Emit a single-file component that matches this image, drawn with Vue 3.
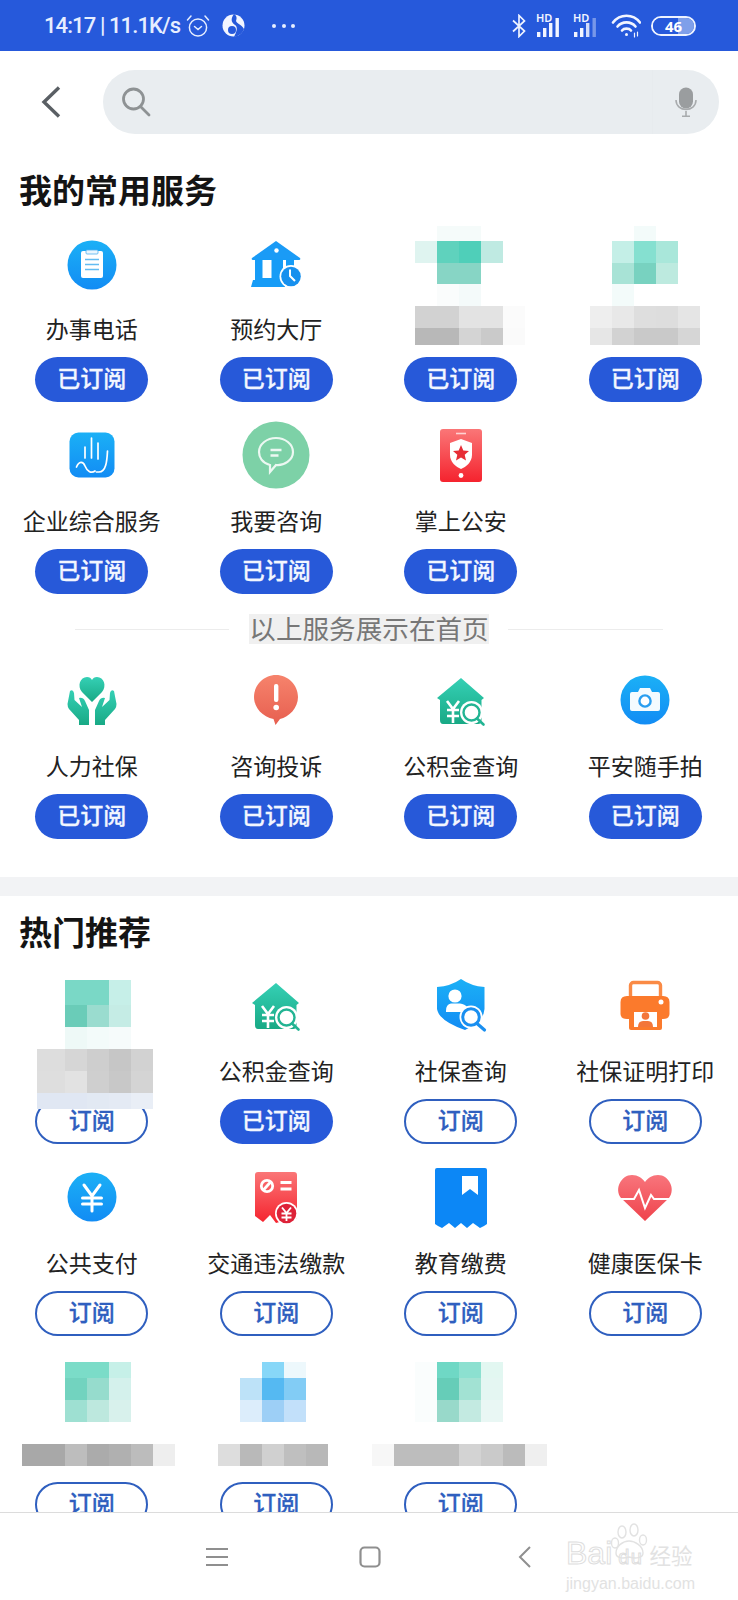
<script setup>
const mk = (name, icon, on = true, mosaic = null) => ({ name, icon, on, mosaic })
const _ = ''
const mosaicA = { left: 46.5, top: 2, cols: [21.5, 22, 22, 22, 22], rows: [15, 22, 21, 22, 22, 17], cells: [
  _, '#f5fbfa', '#f5fbfa', _, _,
  '#dff4f0', '#5fd2bd', '#4fcfb9', '#bfeae2', _,
  _, '#87d5c5', '#87d5c5', _, _,
  _, '#fafcfc', '#f4fafa', _, _,
  '#d2d2d2', '#d2d2d2', '#e3e3e3', '#e3e3e3', '#fbfbfb',
  '#b8b8b8', '#b8b8b8', '#d4d4d4', '#cacaca', '#fafafa'
] }
const mosaicB = { left: 37, top: 2, cols: [22, 21.5, 22, 22, 22], rows: [15, 22, 21, 22, 22, 17], cells: [
  _, _, '#f3fbfa', _, _,
  _, '#c4efe7', '#85e0d0', '#a9e7da', _,
  _, '#a8e3d6', '#78d2c0', '#bdeadf', _,
  _, '#f3fbfa', _, _, _,
  '#eeeeee', '#e8e8e8', '#dedede', '#dddddd', '#e5e5e5',
  '#e6e6e6', '#d2d2d2', '#c9c9c9', '#c9c9c9', '#d6d6d6'
] }
const mosaicC = { left: 37, top: 14, cols: [28, 22, 22, 22, 22], rows: [25, 22, 22, 22, 22, 16], cells: [
  _, '#7ad8c6', '#7ad8c6', '#c6efe8', _,
  _, '#6accb8', '#9adccf', '#c5ece5', _,
  _, '#eef9f7', '#f3fbfa', '#f6fbfb', _,
  '#dddddd', '#d6d6d6', '#cecece', '#c6c6c6', '#d2d2d2',
  '#dedede', '#e2e2e2', '#cfcfcf', '#c8c8c8', '#d4d4d4',
  '#e0e7f3', '#e0e7f3', '#e2e9f3', '#e4eaf4', '#e9eef6'
] }
const mosaicD = { left: 22, top: 13, cols: [22, 21, 22, 22, 22, 22, 22], rows: [16, 22, 22, 22, 22], cells: [
  _, _, '#7bdcc8', '#7bdcc8', '#c6f0e8', _, _,
  _, _, '#72d3bf', '#96dccd', '#d4f1ec', _, _,
  _, _, '#9ee0d2', '#bde8de', '#d8f1ec', _, _,
  _, _, _, _, _, _, _,
  '#a8a8a8', '#a8a8a8', '#bdbdbd', '#ababab', '#b0b0b0', '#bcbcbc', '#eeeeee'
] }
const mosaicE = { left: 33.5, top: 13, cols: [22.5, 21.5, 22, 22, 22], rows: [16, 22, 22, 22, 22], cells: [
  _, _, '#87d7f8', '#edf8fc', _,
  _, '#bde2f8', '#55b9f2', '#82ccf5', _,
  _, '#dcedfb', '#9dcff6', '#c2e0fa', _,
  _, _, _, _, _,
  '#dddddd', '#b9b9b9', '#d0d0d0', '#bfbfbf', '#b8b8b8'
] }
const mosaicF = { left: 3, top: 13, cols: [22, 21.5, 21.5, 22, 22, 22, 22, 22], rows: [16, 22, 22, 22, 22], cells: [
  _, _, '#fafdfd', '#6fd8c5', '#8ce0d0', '#e2f7f1', _, _,
  _, _, '#fafdfd', '#66cdb8', '#a2e2d3', '#e4f6f2', _, _,
  _, _, '#fafdfd', '#98d9ca', '#c3eae1', '#e9f7f4', _, _,
  _, _, _, _, _, _, _, _,
  '#f7f7f7', '#bdbdbd', '#bdbdbd', '#bdbdbd', '#d3d3d3', '#cacaca', '#bbbbbb', '#efefef'
] }

const common = [
  mk('办事电话', 'clip'), mk('预约大厅', 'bank'), mk('', '', true, mosaicA), mk('', '', true, mosaicB),
  mk('企业综合服务', 'hand'), mk('我要咨询', 'chat'), mk('掌上公安', 'phone')
]
const common2 = [
  mk('人力社保', 'care'), mk('咨询投诉', 'alert'), mk('公积金查询', 'house'), mk('平安随手拍', 'camera')
]
const hot = [
  mk('', '', false, mosaicC), mk('公积金查询', 'house'), mk('社保查询', 'shield', false), mk('社保证明打印', 'printer', false),
  mk('公共支付', 'yen', false), mk('交通违法缴款', 'receipt', false), mk('教育缴费', 'book', false), mk('健康医保卡', 'heart', false),
  mk('', '', false, mosaicD), mk('', '', false, mosaicE), mk('', '', false, mosaicF)
]
const mosaicStyle = (m) => ({
  left: m.left + 'px',
  top: m.top + 'px',
  gridTemplateColumns: m.cols.map((c) => c + 'px').join(' '),
  gridTemplateRows: m.rows.map((c) => c + 'px').join(' ')
})
const groups = [common, common2, hot]
</script>

<template>
  <div class="page">
    <svg class="defs" width="0" height="0" aria-hidden="true">
      <defs>
        <linearGradient id="gBlue" x1="0" y1="0" x2="0" y2="1"><stop offset="0" stop-color="#1bb0f6" /><stop offset="1" stop-color="#128cf4" /></linearGradient>
        <linearGradient id="gRed" x1="0" y1="0" x2="0" y2="1"><stop offset="0" stop-color="#fa7677" /><stop offset="1" stop-color="#f5232e" /></linearGradient>
        <linearGradient id="gGreen" x1="0" y1="0" x2="0" y2="1"><stop offset="0" stop-color="#35d0b5" /><stop offset="1" stop-color="#18a985" /></linearGradient>
        <linearGradient id="gCoral" x1="0" y1="0" x2="0" y2="1"><stop offset="0" stop-color="#f6836c" /><stop offset="1" stop-color="#e75f50" /></linearGradient>
        <linearGradient id="gHeart" x1="0" y1="0" x2="0" y2="1"><stop offset="0" stop-color="#f8757c" /><stop offset="1" stop-color="#ef434c" /></linearGradient>
      </defs>
    </svg>

    <header class="status">
      <span class="time">14:17 | 11.1K/s</span>
      <svg class="st-alarm" width="24" height="24" viewBox="0 0 24 24" fill="none" stroke="#e6eeff" stroke-width="1.5" stroke-linecap="round">
        <circle cx="12" cy="13.5" r="8.6" />
        <path d="M8.5 12.5 12 15.5 15.5 12.5" />
        <path d="M1.5 6 5 2M22.5 6 19 2" />
      </svg>
      <svg class="st-note" width="23" height="23" viewBox="0 0 23 23">
        <circle cx="11.5" cy="11.5" r="11" fill="#f2f5ff" />
        <path d="M12 0C9 4 8.5 8 13 11c3 2 2 6-1 12 5-1 9-4 10-8-3-5-7-5-8-8 1-3 1-5-2-7Z" fill="#2659db" />
        <circle cx="10" cy="16" r="4" fill="#2659db" />
      </svg>
      <div class="st-dots"><i></i><i></i><i></i></div>
      <div class="st-right">
        <svg width="14" height="24" viewBox="0 0 14 24" fill="none" stroke="#eef3ff" stroke-width="1.7">
          <path d="M1 6.5 12.5 17 7 22.5V1.5L12.5 7 1 17.5" />
        </svg>
        <div class="sig">
          <span class="hd">HD</span>
          <svg width="27" height="20" viewBox="0 0 27 20" fill="#f2f5ff">
            <rect x="2" y="15" width="3.4" height="5" /><rect x="8" y="11" width="3.4" height="9" /><rect x="14" y="6" width="3.4" height="14" /><rect x="20.5" y="1" width="3.4" height="19" />
          </svg>
        </div>
        <div class="sig">
          <span class="hd">HD</span>
          <svg width="27" height="20" viewBox="0 0 27 20" fill="#f2f5ff">
            <rect x="2" y="15" width="3.4" height="5" /><rect x="8" y="11" width="3.4" height="9" /><rect x="14" y="6" width="3.4" height="14" opacity=".85" /><rect x="20.5" y="1" width="3.4" height="19" opacity=".4" />
          </svg>
        </div>
        <svg class="st-wifi" width="30" height="24" viewBox="0 0 30 24" fill="none" stroke="#f2f5ff" stroke-width="2.6" stroke-linecap="round">
          <path d="M2 8.5C9-.5 22-.5 29 8.5" />
          <path d="M6.5 12.5C11 7 20 7 24.5 12.5" />
          <path d="M11 16.5C13 14 18 14 20 16.5" />
          <circle cx="15.5" cy="20.5" r="1.5" fill="#f2f5ff" stroke="none" />
          <path d="M23.5 19V23M26.5 18V22" stroke-width="1.2" />
        </svg>
        <div class="batt"><span class="batt-fill"></span><span class="batt-num">46</span></div>
      </div>
    </header>

    <div class="topbar">
      <svg class="back" width="20" height="32" viewBox="0 0 20 32" fill="none" stroke="#5a5f64" stroke-width="3.4">
        <path d="M18 1.5 3 16 18 30.5" />
      </svg>
      <div class="search">
        <svg width="30" height="30" viewBox="0 0 30 30" fill="none" stroke="#8e9294" stroke-width="2.8">
          <circle cx="12.5" cy="12" r="10" />
          <path d="M19.5 19.5 28 28" stroke-linecap="round" />
        </svg>
        <div class="mic">
          <svg width="22" height="30" viewBox="0 0 22 30">
            <rect x="4" y="0.5" width="14" height="21" rx="7" fill="#9a9d9f" />
            <path d="M1 13c0 12.5 20 12.5 20 0M11 24v5M7 29.2h8" fill="none" stroke="#a8abad" stroke-width="1.6" />
          </svg>
        </div>
      </div>
    </div>

    <main class="content">
      <h2 class="title title-first">我的常用服务</h2>
      <template v-for="(group, gi) in groups" :key="gi">
        <template v-if="gi === 1">
          <div class="divider"><span class="rule rule-l"></span><span class="note">以上服务展示在首页</span><span class="rule rule-r"></span></div>
        </template>
        <template v-if="gi === 2">
          <div class="band"></div>
          <h2 class="title title-second">热门推荐</h2>
        </template>
        <div class="grid" :class="{ 'grid-after': gi === 1 }">
          <div v-for="(it, i) in group" :key="i" class="item">
            <div class="icon">
              <svg v-if="it.icon" width="80" height="80" viewBox="0 0 80 80">
                <g v-if="it.icon === 'clip'" transform="translate(0 2)">
                  <circle cx="40" cy="40" r="24.5" fill="url(#gBlue)" />
                  <rect x="29" y="26" width="22" height="27" rx="2" fill="#fff" />
                  <rect x="34" y="25" width="12" height="4" rx="1" fill="#eaf6fe" stroke="#4fb0ef" stroke-width=".8" />
                  <path d="M33 34.5H47M33 39.5H47M33 44.5H47" stroke="#62bcf2" stroke-width="1.5" />
                </g>
                <g v-else-if="it.icon === 'bank'" transform="translate(0 1)">
                  <path d="M40 17 64 34q1 2-1 2H17q-2 0-1-2Z" fill="#1a9bf6" />
                  <circle cx="40.5" cy="26.5" r="2.2" fill="#fff" />
                  <path d="M19 35H47V56H19ZM50 35H58V45H50ZM17 56H49V63H15Z" fill="#169cf7" />
                  <rect x="26.5" y="36" width="9" height="18" fill="#fff" />
                  <circle cx="55" cy="52.5" r="11.5" fill="#fff" />
                  <circle cx="55" cy="52.5" r="9.8" fill="#1790ee" />
                  <path d="M54 45.5V52L59 57" stroke="#fff" stroke-width="2" fill="none" />
                </g>
                <template v-else-if="it.icon === 'hand'">
                  <rect x="17.5" y="17.5" width="45" height="45" rx="9" fill="url(#gBlue)" />
                  <path d="M33 32V43M39.5 23V43M46 28V44M55.5 36C55 46 54 57 47 57H44.5M24.5 52C27 46 31 46 33 51S39 59 43 56" fill="none" stroke="#fff" stroke-width="1.7" stroke-linecap="round" />
                </template>
                <template v-else-if="it.icon === 'chat'">
                  <circle cx="40" cy="40" r="33.5" fill="#7dd1a7" />
                  <path d="M34 50C26 48 23 42 23 37 23 29 31 23 40 23S57 29 57 37 48 51 40 50L34 57Z" fill="none" stroke="#ecf8f2" stroke-width="2.2" />
                  <path d="M34.5 35H45.5M34.5 40.5H42.5" stroke="#ecf8f2" stroke-width="2.4" />
                </template>
                <template v-else-if="it.icon === 'phone'">
                  <rect x="19" y="14" width="42" height="53" rx="3" fill="url(#gRed)" />
                  <path d="M35 18.5H45" stroke="#ffd2d2" stroke-width="1.6" />
                  <path d="M40 24 51 28V40C51 47 45 52 40 54 35 52 29 47 29 40V28Z" fill="#fff" />
                  <path d="M40 30 42.3 35.5 48 36 43.7 39.8 45 45.5 40 42.4 35 45.5 36.3 39.8 32 36 37.7 35.5Z" fill="#e72d35" />
                  <circle cx="40" cy="60.5" r="2.4" fill="#fff" />
                </template>
                <template v-else-if="it.icon === 'care'">
                  <path d="M40 42 30 32C25 26 28 17 35 17 37.5 17 39 18 40 20 41 18 42.5 17 45 17 52 17 55 26 50 32Z" fill="url(#gGreen)" />
                  <path d="M18 31Q21 29 22 33L22.5 40 30 47 27 38Q31 37 33 41L37 50V65H27V60L17 49Q15.5 47 15.5 44Z" fill="url(#gGreen)" />
                  <path d="M18 31Q21 29 22 33L22.5 40 30 47 27 38Q31 37 33 41L37 50V65H27V60L17 49Q15.5 47 15.5 44Z" fill="url(#gGreen)" transform="translate(80 0) scale(-1 1)" />
                </template>
                <template v-else-if="it.icon === 'alert'">
                  <path d="M40 15C52 15 62 25 62 37 62 48 53 57 44 59L39.5 65 37.5 59C27 57 18 48 18 37 18 25 28 15 40 15Z" fill="url(#gCoral)" />
                  <rect x="38" y="24" width="4.4" height="18" rx="2" fill="#fff" />
                  <circle cx="40.2" cy="47.5" r="2.8" fill="#fff" />
                </template>
                <template v-else-if="it.icon === 'house'">
                  <path d="M40 18 63 38 60.5 40V60Q60.5 64 57 64H22Q19 64 19 60V40L16 38Z" fill="url(#gGreen)" />
                  <path d="M26 41 32 49 38 41M26 50H38M26 56H38M32 49V63" fill="none" stroke="#fff" stroke-width="2.6" />
                  <circle cx="50.5" cy="52.5" r="11.5" fill="#fff" />
                  <circle cx="50.5" cy="52.5" r="8" fill="#fff" stroke="#22b493" stroke-width="2.4" />
                  <path d="M56 58.5 62.5 64.5" stroke="#22b493" stroke-width="2.6" stroke-linecap="round" />
                </template>
                <template v-else-if="it.icon === 'camera'">
                  <circle cx="40" cy="40" r="24.5" fill="url(#gBlue)" />
                  <path d="M27 32H33L35 28H45L47 32H53Q55 32 55 34V49Q55 51 53 51H27Q25 51 25 49V34Q25 32 27 32Z" fill="#f4fbff" />
                  <circle cx="40" cy="41" r="5.6" fill="#fff" stroke="#2a9ef0" stroke-width="2.4" />
                </template>
                <template v-else-if="it.icon === 'shield'">
                  <path d="M40 14Q50 21 63.5 22V44Q63 56 44 65 18 56 16 44V22Q30 21 40 14Z" fill="url(#gBlue)" />
                  <circle cx="34" cy="31" r="6.6" fill="#fff" />
                  <path d="M25 46Q25 39 30 38.5H39Q44 39 46 42L41 47H25Z" fill="#fff" />
                  <circle cx="50" cy="52" r="11.5" fill="#fff" />
                  <circle cx="50" cy="52" r="8.3" fill="#fff" stroke="#1a8ff0" stroke-width="3" />
                  <path d="M56 58.5 63.5 65" stroke="#1a8ff0" stroke-width="3.2" stroke-linecap="round" />
                </template>
                <template v-else-if="it.icon === 'printer'">
                  <rect x="25.5" y="17.5" width="30" height="18" rx="3" fill="#fff" stroke="#fa8a45" stroke-width="3.4" />
                  <path d="M22 31H58Q64.5 31 64.5 37V49Q64.5 54 58 54H22Q15.5 54 15.5 49V37Q15.5 31 22 31Z" fill="#fb7a2c" />
                  <circle cx="56" cy="37" r="2.5" fill="#fff" />
                  <rect x="24" y="43" width="33" height="22" rx="2" fill="#fb7a2c" />
                  <rect x="29" y="47" width="23" height="15" fill="#fff" />
                  <circle cx="40.5" cy="51" r="3.8" fill="#f3763a" />
                  <path d="M33 62Q33 56 38 56H43Q48 56 48 62Z" fill="#f3763a" />
                </template>
                <template v-else-if="it.icon === 'yen'">
                  <circle cx="40" cy="40" r="24.5" fill="url(#gBlue)" />
                  <path d="M32 28 40 39 48 28M30.5 41H49.5M30.5 47H49.5M40 39V54" fill="none" stroke="#fff" stroke-width="3" stroke-linecap="round" />
                </template>
                <template v-else-if="it.icon === 'receipt'">
                  <path d="M22 15H58Q61 15 61 18V62L54 57 47 64 40 66 34 58 27 65 19 59V18Q19 15 22 15Z" fill="url(#gRed)" />
                  <circle cx="31" cy="29" r="5.7" fill="none" stroke="#fff" stroke-width="2.8" />
                  <path d="M27 33.5 35 24.5M44.5 25.5H55.5M44.5 32H55.5" stroke="#fff" stroke-width="2.8" />
                  <circle cx="50.5" cy="56.5" r="11.5" fill="#fff" />
                  <circle cx="50.5" cy="56.5" r="9.8" fill="#dd2238" />
                  <path d="M46 50.5 50.5 56 55 50.5M45.5 56.5H55.5M45.5 60.5H55.5M50.5 56V64" fill="none" stroke="#fff" stroke-width="1.8" />
                </template>
                <template v-else-if="it.icon === 'book'">
                  <path d="M16 11H64Q66 11 66 13V67L63 69 59 71 52 66 46 71 40 66 34 71 28 66 21 71 17 69 14 67V13Q14 11 16 11Z" fill="#0c87f6" />
                  <path d="M41 19H57V38L49 32 41 38Z" fill="#fff" />
                </template>
                <template v-else-if="it.icon === 'heart'">
                  <path d="M40 64 16 41C9 32 16 18 27 18 33 18 37 21 40 25 43 21 47 18 53 18 64 18 71 32 64 41Z" fill="url(#gHeart)" />
                  <path d="M14 42H29L34 33 40 51 46 38 49 42H66" fill="none" stroke="#fff" stroke-width="2" />
                </template>
              </svg>
            </div>
            <div class="label">{{ it.name }}</div>
            <button class="btn" :class="it.on ? 'btn-on' : 'btn-off'" type="button">{{ it.on ? '已订阅' : '订阅' }}</button>
            <div v-if="it.mosaic" class="mosaic" :style="mosaicStyle(it.mosaic)">
              <i v-for="(c, k) in it.mosaic.cells" :key="k" :style="{ background: c || 'transparent' }"></i>
            </div>
          </div>
        </div>
      </template>
    </main>

    <nav class="nav">
      <div class="nav-icons">
        <svg width="22" height="20" viewBox="0 0 22 20" fill="none" stroke="#8f8f8f" stroke-width="2">
          <path d="M0 2H22M0 10H22M0 18H22" />
        </svg>
        <svg width="22" height="22" viewBox="0 0 22 22" fill="none" stroke="#8f8f8f" stroke-width="2.2">
          <rect x="1.5" y="1.5" width="19" height="19" rx="4" />
        </svg>
        <svg width="13" height="22" viewBox="0 0 13 22" fill="none" stroke="#8f8f8f" stroke-width="2">
          <path d="M12 1 2 11 12 21" />
        </svg>
      </div>
      <div class="mark">
        <svg class="paw" width="40" height="38" viewBox="0 0 40 38" fill="none" stroke="#e2e2e2" stroke-width="1.4">
          <ellipse cx="12" cy="10" rx="4" ry="6" /><ellipse cx="24" cy="8" rx="4" ry="6" /><ellipse cx="5" cy="21" rx="3.5" ry="5" /><ellipse cx="33" cy="18" rx="3.5" ry="5" />
          <path d="M6 31C6 24 13 19 19 19S33 24 33 31C33 36 26 37 19 35 12 37 6 36 6 31Z" />
        </svg>
        <div class="mark-top"><span class="mark-bai">Bai</span><span class="mark-du">du</span><span class="mark-cn">经验</span></div>
        <div class="mark-url">jingyan.baidu.com</div>
      </div>
    </nav>
  </div>
</template>

<style scoped>
.page {
  position: relative;
  width: 738px;
  height: 1600px;
  display: flex;
  flex-direction: column;
  overflow: hidden;
  background: #fff;
  font-family: "Noto Sans CJK SC", "Noto Sans", sans-serif;
  color: #1f1f1f;
}
.defs { position: absolute; }

.status {
  flex: none;
  height: 51px;
  box-sizing: border-box;
  padding: 0 0 0 44px;
  display: flex;
  align-items: center;
  background: #2659db;
  color: #e6eeff;
}
.time {
  font-family: Roboto, sans-serif;
  font-size: 22px;
  font-weight: 500;
  letter-spacing: -0.9px;
  line-height: 51px;
  width: 142px;
  white-space: nowrap;
}
.st-note { margin-left: 12px; }
.st-dots { display: flex; gap: 5.5px; margin-left: 27px; }
.st-dots i { width: 4px; height: 4px; border-radius: 50%; background: #e6eeff; }
.st-right { margin-left: 217px; display: flex; align-items: center; gap: 9px; }
.st-wifi { margin-left: 2px; }
.sig { position: relative; width: 28px; height: 22px; }
.sig svg { position: absolute; left: 0; bottom: 0; }
.hd {
  position: absolute;
  left: 1px;
  top: -3px;
  z-index: 1;
  font-family: "Noto Sans", sans-serif;
  font-size: 11px;
  font-weight: 600;
  line-height: 12px;
  color: #f2f5ff;
}
.batt {
  position: relative;
  width: 45px;
  height: 20px;
  margin-left: 1px;
  box-sizing: border-box;
  border: 2px solid #eef3ff;
  border-radius: 10px;
  display: flex;
  align-items: center;
  justify-content: center;
  overflow: hidden;
}
.batt-fill { position: absolute; left: 0; top: 0; bottom: 0; width: 100%; background: linear-gradient(90deg, #2659db 60%, #7f9fea 60%); }
.batt-num {
  position: relative;
  font-family: "Noto Sans", sans-serif;
  font-size: 15px;
  font-weight: 700;
  line-height: 16px;
  color: #fff;
}

.topbar {
  flex: none;
  display: flex;
  align-items: center;
  padding: 19px 19px 0 41px;
}
.search {
  flex: 1;
  height: 64px;
  margin-left: 41.5px;
  padding: 0 22px 0 18px;
  border-radius: 32px;
  background: #e9edf0;
  display: flex;
  align-items: center;
  justify-content: space-between;
}
.mic { height: 64px; padding-left: 22px; display: flex; align-items: center; border-left: 1px solid #e7ebee; }

.content { flex: 1; min-height: 0; overflow: hidden; }
.title {
  margin: 0;
  padding-left: 19px;
  font-size: 33px;
  line-height: 40px;
  font-weight: 700;
  color: #141414;
}
.title-first { margin-top: 35px; margin-bottom: 15px; }
.title-second { margin-top: 15px; margin-bottom: 15px; }
.grid { display: grid; grid-template-columns: repeat(4, 184.5px); row-gap: 13.5px; margin-left: -0.5px; }
.grid-after { margin-top: 17.5px; }
.item { position: relative; display: flex; flex-direction: column; align-items: center; }
.icon { width: 80px; height: 80px; margin-top: -1px; }
.icon svg { display: block; }
.label {
  height: 34px;
  margin-top: 8px;
  margin-bottom: 2px;
  font-size: 23px;
  line-height: 34px;
  white-space: nowrap;
  color: #222;
}
.btn {
  width: 113px;
  height: 45px;
  margin-top: 10px;
  box-sizing: border-box;
  border-radius: 23px;
  font-family: inherit;
  font-size: 23px;
  font-weight: 500;
  line-height: 1;
  padding: 0 0 4px;
  -webkit-text-stroke: 0.3px currentColor;
}
.btn-on { border: none; background: #2759d9; color: #f2f6ff; }
.btn-off { border: 2px solid #2f5fbf; background: #fff; color: #2f5fbf; }
.mosaic { position: absolute; display: grid; z-index: 2; }

.divider {
  position: relative;
  height: 30px;
  margin-top: 20px;
  display: flex;
  align-items: center;
  justify-content: center;
}
.rule { position: absolute; top: 15px; height: 1px; background: #ececec; }
.rule-l { left: 75px; width: 154px; }
.rule-r { left: 508px; width: 155px; }
.note {
  width: 240px;
  box-sizing: border-box;
  padding-bottom: 2px;
  font-size: 26.6px;
  line-height: 28px;
  text-align: center;
  white-space: nowrap;
  background: #f0f0f0;
  color: #777;
}
.band { height: 19px; margin-top: 38px; background: #f2f3f5; }

.nav {
  position: relative;
  flex: none;
  height: 88px;
  box-sizing: border-box;
  border-top: 1.5px solid #dcdcdc;
  background: #fff;
}
.nav-icons {
  display: flex;
  align-items: center;
  padding: 33px 0 0 206px;
  gap: 131px;
}
.nav-icons svg:last-child { margin-left: 6px; }
.mark { position: absolute; left: 566px; top: 8px; width: 134px; color: #e2e2e2; }
.paw { position: absolute; left: 44px; top: 1px; }
.mark-top {
  display: flex;
  align-items: baseline;
  margin-top: 13px;
  font-family: "Liberation Sans", sans-serif;
  font-size: 32px;
  line-height: 38px;
}
.mark-bai { color: #fff; -webkit-text-stroke: 1px #dedede; }
.mark-du { font-size: 20px; margin-left: 6px; letter-spacing: 1.5px; color: #fff; -webkit-text-stroke: 1px #dedede; }
.mark-cn { font-family: "Noto Sans CJK SC", sans-serif; font-size: 21.5px; margin-left: 6px; white-space: nowrap; }
.mark-url {
  margin-top: -3px;
  font-family: "Liberation Sans", sans-serif;
  font-size: 16px;
  line-height: 22px;
  white-space: nowrap;
}
</style>
